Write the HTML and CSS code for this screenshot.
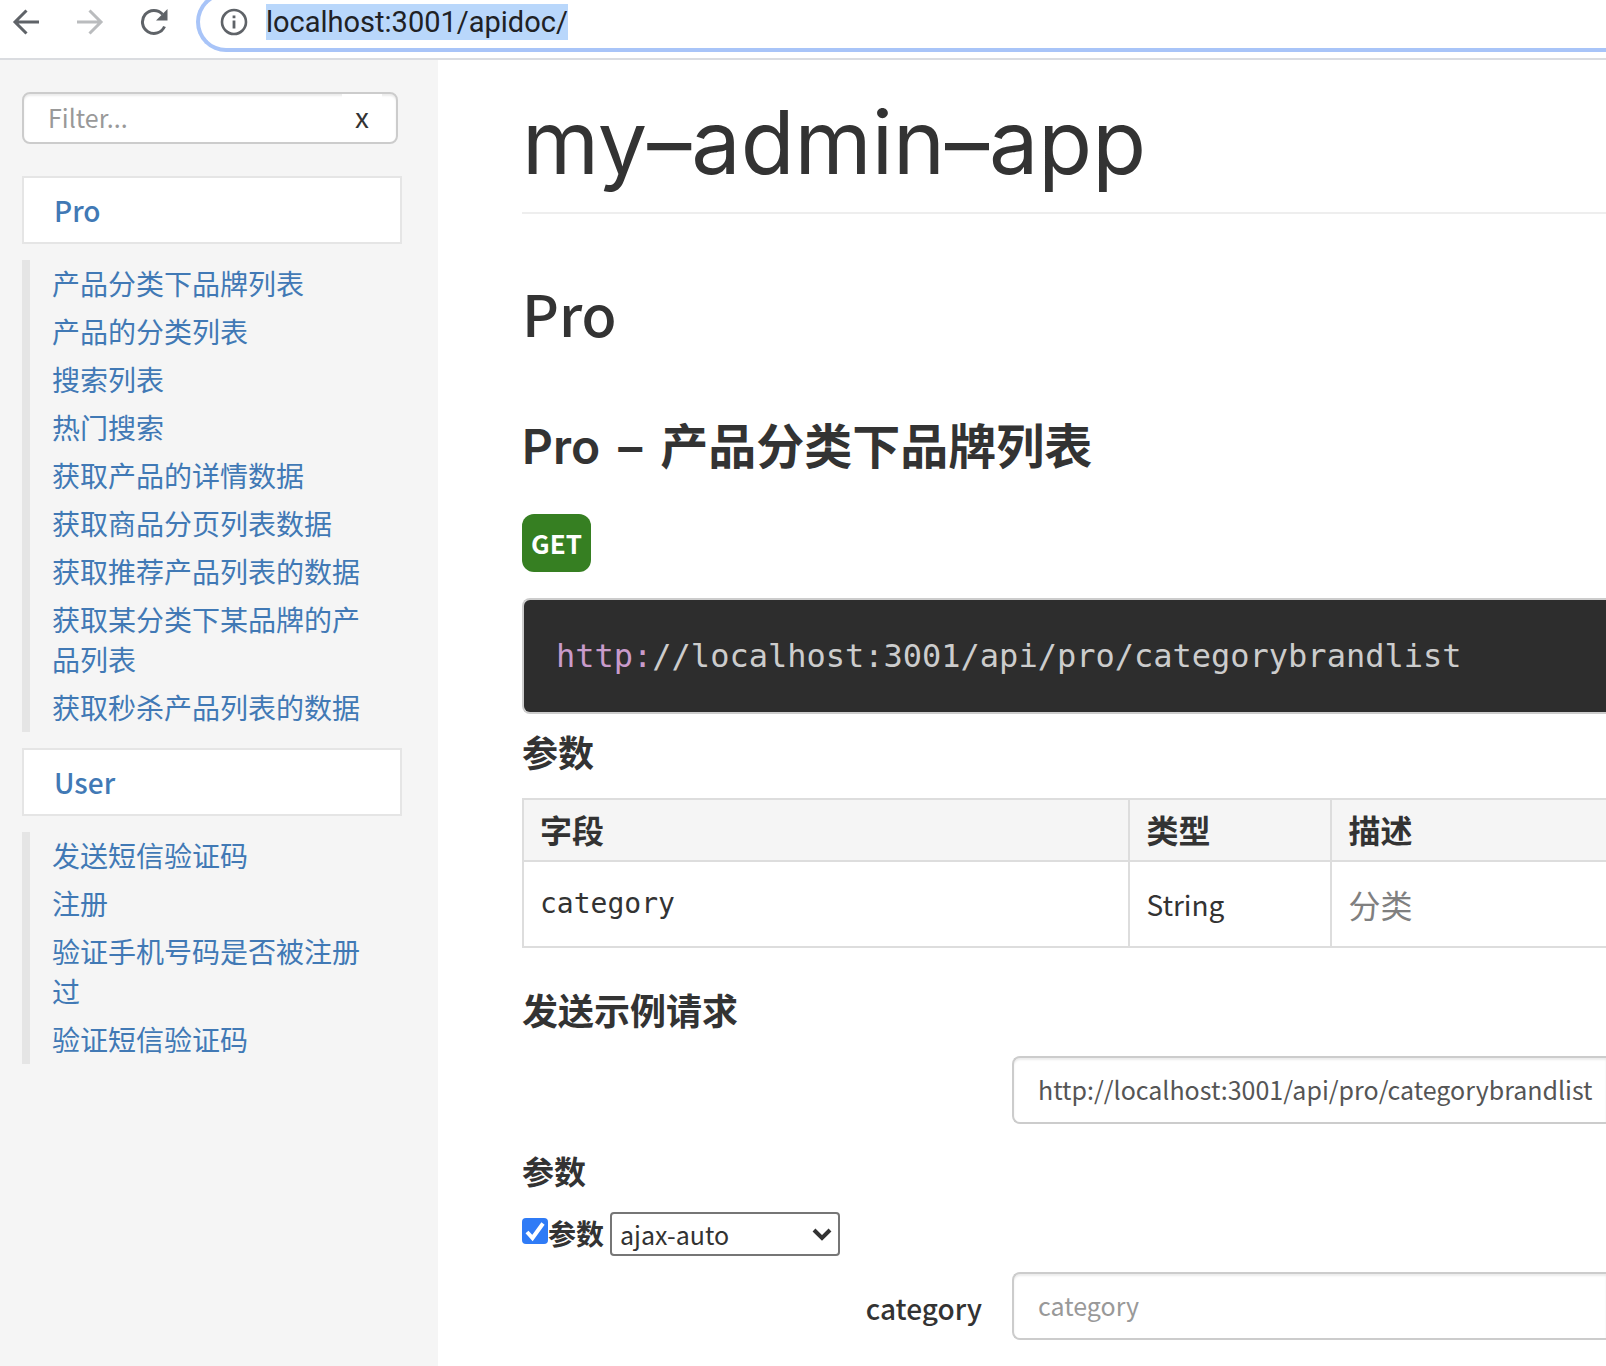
FILE: index.html
```html
<!DOCTYPE html>
<html lang="zh-CN">
<head>
<meta charset="utf-8">
<meta name="viewport" content="width=device-width, initial-scale=1">
<title>my-admin-app</title>
<link rel="stylesheet" href="styles.css">
</head>
<body>
<header class="toolbar">
  <button class="tool-button" type="button" aria-label="Back">
    <svg width="28" height="28" viewBox="0 0 28 28" fill="none" stroke="#5f6368" stroke-width="3"><path d="M27 14H3M14.500 2.500L3 14l11.500 11.500"/></svg>
  </button>
  <button class="tool-button" type="button" aria-label="Forward" disabled>
    <svg width="28" height="28" viewBox="0 0 28 28" fill="none" stroke="#babcbe" stroke-width="3"><path d="M1 14h24M13.500 2.500L25 14 13.500 25.500"/></svg>
  </button>
  <button class="tool-button" type="button" aria-label="Reload">
    <svg width="28" height="28" viewBox="0 0 28 28"><path d="M24.500 18.500A11.500 11.500 0 1 1 22.500 6.200" fill="none" stroke="#5f6368" stroke-width="3"/><path d="M27.500 1v11.500H16z" fill="#5f6368"/></svg>
  </button>
  <div class="omnibox">
    <svg class="info-icon" width="28" height="28" viewBox="0 0 28 28"><circle cx="14" cy="14" r="12" fill="none" stroke="#5f6368" stroke-width="2.600"/><path d="M12.600 12.500h2.800v8h-2.800zM12.600 7.500h2.800v2.800h-2.800z" fill="#5f6368"/></svg>
    <input class="address" type="text" value="localhost:3001/apidoc/" aria-label="Address">
  </div>
</header>
<div class="page">
  <nav class="sidebar">
    <div class="filter">
      <input class="filter-input" type="text" placeholder="Filter..." aria-label="Filter">
      <button class="filter-clear" type="button">x</button>
    </div>
    <a class="nav-header" href="#pro">Pro</a>
    <ul class="nav-list">
      <li><a href="#pro-1">产品分类下品牌列表</a></li>
      <li><a href="#pro-2">产品的分类列表</a></li>
      <li><a href="#pro-3">搜索列表</a></li>
      <li><a href="#pro-4">热门搜索</a></li>
      <li><a href="#pro-5">获取产品的详情数据</a></li>
      <li><a href="#pro-6">获取商品分页列表数据</a></li>
      <li><a href="#pro-7">获取推荐产品列表的数据</a></li>
      <li><a href="#pro-8">获取某分类下某品牌的产品列表</a></li>
      <li><a href="#pro-9">获取秒杀产品列表的数据</a></li>
    </ul>
    <a class="nav-header" href="#user">User</a>
    <ul class="nav-list">
      <li><a href="#user-1">发送短信验证码</a></li>
      <li><a href="#user-2">注册</a></li>
      <li><a href="#user-3">验证手机号码是否被注册过</a></li>
      <li><a href="#user-4">验证短信验证码</a></li>
    </ul>
  </nav>
  <main class="content">
    <h1 class="title">my–admin–app</h1>
    <h2 class="group-title" id="pro">Pro</h2>
    <h3 class="endpoint-title" id="pro-1"><span>Pro</span> <span>–</span> <span>产品分类下品牌列表</span></h3>
    <span class="method">GET</span>
    <pre class="url"><code><span class="scheme">http:</span>//localhost:3001/api/pro/categorybrandlist</code></pre>
    <h4 class="section-title">参数</h4>
    <table class="params">
      <thead>
        <tr><th class="col-field">字段</th><th class="col-type">类型</th><th>描述</th></tr>
      </thead>
      <tbody>
        <tr><td class="field">category</td><td>String</td><td class="description">分类</td></tr>
      </tbody>
    </table>
    <h4 class="section-title sample-title">发送示例请求</h4>
    <form class="sample">
      <div class="form-row">
        <input class="control" type="text" value="http://localhost:3001/api/pro/categorybrandlist" aria-label="URL">
      </div>
      <h5 class="form-title">参数</h5>
      <div class="param-options">
        <input class="tick" type="checkbox" id="params-on" checked>
        <label class="tick-label" for="params-on">参数</label>
        <select class="mode" aria-label="参数">
          <option>ajax-auto</option>
        </select>
      </div>
      <div class="form-row">
        <label class="control-label" for="category">category</label>
        <input class="control" type="text" id="category" placeholder="category">
      </div>
    </form>
  </main>
</div>
</body>
</html>
```
FILE: styles.css
```css
* {
  box-sizing: border-box;
}

body {
  margin: 0;
  min-height: 100vh;
  display: flex;
  flex-direction: column;
  background: #fff;
  color: #333;
  font-family: "Noto Sans CJK SC", sans-serif;
  font-size: 28px;
  line-height: 40px;
  overflow-x: hidden;
}

h1, h2, h3, h4, h5, pre, ul {
  margin: 0;
  padding: 0;
}

input, button, select {
  margin: 0;
  font-family: inherit;
  color: inherit;
}

a {
  color: #4179b5;
  text-decoration: none;
}

/* Browser toolbar */
.toolbar {
  display: flex;
  align-items: flex-start;
  height: 60px;
  padding-left: 12px;
  gap: 36px;
  overflow: hidden;
  border-bottom: 2px solid #dadce0;
}

.tool-button {
  display: flex;
  padding: 8px 0 0;
  border: 0;
  background: none;
}

.omnibox {
  flex: 1;
  display: flex;
  align-items: center;
  gap: 18px;
  height: 60px;
  margin: -8px 0 0 -8px;
  padding-left: 20px;
  border: 4px solid #a8c4f8;
  border-right: 0;
  border-radius: 30px 0 0 30px;
}

.address {
  width: 302px;
  height: 36px;
  padding: 0;
  border: 0;
  background: #b9d7fb;
  color: #202124;
  font-family: Roboto, sans-serif;
  font-size: 29px;
}

/* Page */
.page {
  flex: 1;
  display: flex;
}

.sidebar {
  flex: 0 0 438px;
  padding: 32px 36px 32px 22px;
  background: #f5f5f5;
}

.filter {
  display: flex;
  width: 376px;
  height: 52px;
  margin-bottom: 32px;
  padding-right: 14px;
  border: 2px solid #ccc;
  border-radius: 8px;
  background: #fff;
  box-shadow: inset 0 2px 2px rgba(0, 0, 0, 0.08);
}

.filter-input {
  flex: 1;
  min-width: 0;
  padding: 0 24px 2px;
  border: 0;
  background: none;
  font-size: 25px;
}

::placeholder {
  color: #999;
  opacity: 1;
}

.filter-clear {
  width: 40px;
  padding: 0 0 4px;
  border: 0;
  background: #fff;
  font-size: 28px;
}

.nav-header {
  display: block;
  padding: 12px 30px;
  border: 2px solid #e5e5e5;
  background: #fff;
  font-weight: 500;
}

.nav-list {
  margin: 16px 0;
  padding: 0 36px 0 22px;
  border-left: 8px solid #e5e5e5;
  list-style: none;
}

.nav-list li {
  padding: 3px 0 5px;
}

.content {
  flex: 1;
  min-width: 0;
  padding: 30px 0 26px 84px;
}

.title {
  padding-bottom: 18px;
  border-bottom: 2px solid #eee;
  font-family: Inter, sans-serif;
  font-size: 88px;
  font-weight: 400;
  line-height: 104px;
}

.group-title {
  margin-top: 62px;
  font-size: 57px;
  font-weight: 500;
  line-height: 72px;
}

.endpoint-title {
  display: flex;
  gap: 18px;
  margin-top: 71px;
  font-family: Inter, "Noto Sans CJK SC", sans-serif;
  font-size: 48px;
  font-weight: 600;
  line-height: 56px;
}

.method {
  display: block;
  width: fit-content;
  margin: 39px 0 26px;
  padding: 9px;
  border-radius: 12px;
  background: #367f22;
  color: #fff;
  font-size: 26px;
  font-weight: 700;
}

.url {
  padding: 36px 32px;
  border: 2px solid #ccc;
  border-right: 0;
  border-radius: 8px 0 0 8px;
  background: #2d2d2d;
  color: #ccc;
  font-size: 32px;
}

.url code {
  font-family: "DejaVu Sans Mono", monospace;
}

.scheme {
  color: #c99bcb;
}

.section-title {
  margin: 15px 0 25px;
  font-size: 36px;
  font-weight: 700;
  line-height: 44px;
}

.sample-title {
  margin-top: 39px;
}

.params {
  width: 100%;
  border-collapse: collapse;
  border: 2px solid #ddd;
  border-right: 0;
  table-layout: fixed;
}

.params th,
.params td {
  padding: 9px 16px 11px;
  border: 2px solid #ddd;
  border-right: 0;
  text-align: left;
}

.params th {
  background: #f5f5f5;
  font-size: 32px;
  font-weight: 700;
}

.params td {
  padding: 22px 16px;
}

.col-field {
  width: 56%;
}

.col-type {
  width: 202px;
}

.params .field {
  font-family: "DejaVu Sans Mono", monospace;
}

.params .description {
  color: #808080;
  font-size: 32px;
}

/* Sample request form */
.form-row {
  display: grid;
  grid-template-columns: 460px 1fr;
  gap: 30px;
  align-items: center;
}

.control {
  grid-column: 2;
  width: 100%;
  height: 68px;
  padding: 0 0 2px 24px;
  border: 2px solid #ccc;
  border-right: 0;
  border-radius: 8px 0 0 8px;
  background: #fff;
  box-shadow: inset 0 2px 2px rgba(0, 0, 0, 0.08);
  color: #555;
  font-size: 25px;
}

.control-label {
  padding-top: 4px;
  text-align: right;
  font-weight: 500;
}

.form-title {
  margin: 26px 0 22px;
  font-size: 32px;
  font-weight: 700;
}

.param-options {
  display: flex;
  align-items: center;
  margin-bottom: 16px;
}

.tick {
  appearance: none;
  width: 26px;
  height: 26px;
  margin-bottom: 6px;
  border-radius: 4px;
  background: #2f7bf6 url("data:image/svg+xml,%3Csvg xmlns='http://www.w3.org/2000/svg' viewBox='0 0 26 26'%3E%3Cpath d='M5 14l5.500 6L21 5.500' fill='none' stroke='white' stroke-width='4'/%3E%3C/svg%3E");
}

.tick-label {
  margin-right: 6px;
  padding-bottom: 2px;
  font-weight: 700;
}

.mode {
  appearance: none;
  width: 230px;
  height: 44px;
  padding: 0 40px 0 8px;
  border: 2px solid #767676;
  border-radius: 4px;
  background: #fff url("data:image/svg+xml,%3Csvg xmlns='http://www.w3.org/2000/svg' width='20' height='13' viewBox='0 0 20 13'%3E%3Cpath d='M2 2l8 8 8-8' fill='none' stroke='%23333' stroke-width='4'/%3E%3C/svg%3E") no-repeat right 6px center;
  font-size: 25px;
}
```
